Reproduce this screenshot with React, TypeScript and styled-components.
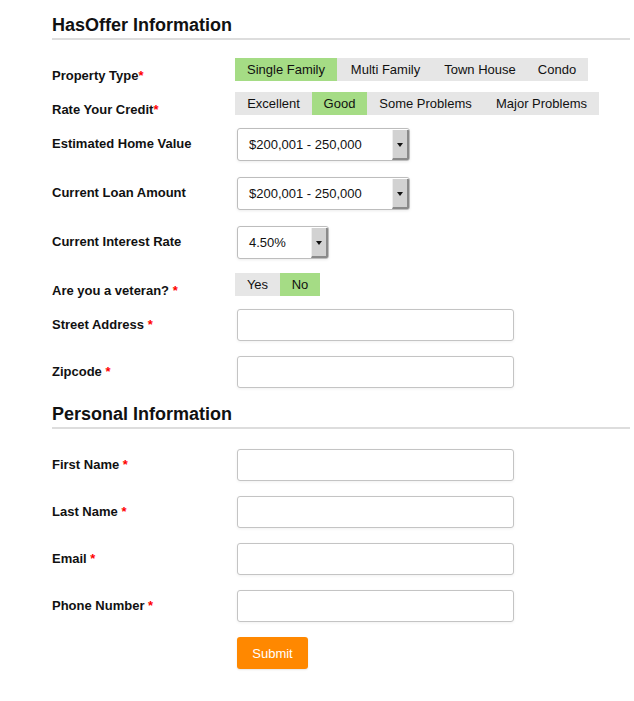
import React from 'react';
import styled, { createGlobalStyle } from 'styled-components';

const GlobalStyle = createGlobalStyle`
  html, body {
    margin: 0;
    padding: 0;
    background: #fff;
  }
  body {
    font-family: "Liberation Sans", Arial, sans-serif;
    color: #111;
  }
`;

const Page = styled.div`
  width: 634px;
  padding: 14px 4px 30px 52px;
  box-sizing: border-box;
`;

const SectionTitle = styled.h2<{ $top?: number }>`
  margin: ${(p) => p.$top ?? 0}px 0 0 0;
  padding: 0 0 2px 0;
  font-size: 18px;
  line-height: 22px;
  font-weight: bold;
  color: #111;
  border-bottom: 2px solid #dddddd;
`;

const Row = styled.div<{ $h: number; $top?: number }>`
  display: flex;
  align-items: flex-start;
  height: ${(p) => p.$h}px;
  margin-top: ${(p) => p.$top ?? 0}px;
`;

const Label = styled.div<{ $pad: number }>`
  width: 183px;
  flex: none;
  padding-top: ${(p) => p.$pad}px;
  font-size: 13px;
  line-height: 15px;
  font-weight: bold;
  color: #111;
`;

const Star = styled.span`
  color: #ff0000;
`;

const ToggleGroup = styled.div`
  display: flex;
  background: #e6e6e6;
`;

const Toggle = styled.div<{ $on?: boolean; $w: number }>`
  width: ${(p) => p.$w}px;
  height: 23px;
  display: flex;
  align-items: center;
  justify-content: center;
  font-size: 13px;
  color: #111;
  background: ${(p) => (p.$on ? '#a5dc85' : '#e6e6e6')};
`;

const Field = styled.div`
  margin-left: 2px;
`;

const SelectBox = styled.div<{ $w: number }>`
  width: ${(p) => p.$w}px;
  height: 33px;
  box-sizing: border-box;
  border: 1px solid #bdbdbd;
  border-radius: 3px;
  box-shadow: 0 1px 3px rgba(0, 0, 0, 0.08);
  display: flex;
  align-items: stretch;
  background: #fff;
  overflow: hidden;
`;

const SelectText = styled.div`
  flex: 1;
  display: flex;
  align-items: center;
  padding-left: 11px;
  font-size: 13px;
  color: #111;
`;

const Arrow = styled.div`
  width: 14px;
  margin: 1px 0 0 0;
  background: #d2d2d2;
  border-right: 2px solid #8a8a8a;
  border-bottom: 2px solid #8a8a8a;
  border-left: 1px solid #eeeeee;
  display: flex;
  align-items: center;
  justify-content: center;
  &::after {
    content: '';
    border-left: 3px solid transparent;
    border-right: 3px solid transparent;
    border-top: 4px solid #111;
    margin-top: 1px;
  }
`;

const TextInput = styled.input`
  width: 277px;
  height: 32px;
  box-sizing: border-box;
  border: 1px solid #c4c4c4;
  border-radius: 3px;
  box-shadow: 0 1px 3px rgba(0, 0, 0, 0.06);
  padding: 0 8px;
  font-family: inherit;
  font-size: 13px;
  outline: none;
  background: #fff;
`;

const Submit = styled.button`
  margin-left: 185px;
  width: 71px;
  height: 32px;
  border: none;
  border-radius: 3px;
  background: #ff8800;
  color: #fff;
  font-family: "Liberation Sans", Arial, sans-serif;
  font-size: 13px;
  box-shadow: 0 1px 2px rgba(0, 0, 0, 0.1);
  cursor: pointer;
`;

const req = <Star>*</Star>;

const Select = ({ value, w }: { value: string; w: number }) => (
  <Field>
    <SelectBox $w={w}>
      <SelectText>{value}</SelectText>
      <Arrow />
    </SelectBox>
  </Field>
);

const InputRow = ({ label, top }: { label: string; top?: number }) => (
  <Row $h={47} $top={top}>
    <Label $pad={8}>
      {label} {req}
    </Label>
    <Field>
      <TextInput type="text" />
    </Field>
  </Row>
);

export default function App() {
  return (
    <Page>
      <GlobalStyle />
      <SectionTitle>HasOffer Information</SectionTitle>

      <Row $h={34} $top={18}>
        <Label $pad={10}>Property Type{req}</Label>
        <ToggleGroup>
          <Toggle $w={102} $on>Single Family</Toggle>
          <Toggle $w={97}>Multi Family</Toggle>
          <Toggle $w={92}>Town House</Toggle>
          <Toggle $w={62}>Condo</Toggle>
        </ToggleGroup>
      </Row>

      <Row $h={36}>
        <Label $pad={10}>Rate Your Credit{req}</Label>
        <ToggleGroup>
          <Toggle $w={77}>Excellent</Toggle>
          <Toggle $w={55} $on>Good</Toggle>
          <Toggle $w={117}>Some Problems</Toggle>
          <Toggle $w={115}>Major Problems</Toggle>
        </ToggleGroup>
      </Row>

      <Row $h={49}>
        <Label $pad={8}>Estimated Home Value</Label>
        <Select value="$200,001 - 250,000" w={173} />
      </Row>

      <Row $h={49}>
        <Label $pad={8}>Current Loan Amount</Label>
        <Select value="$200,001 - 250,000" w={173} />
      </Row>

      <Row $h={47}>
        <Label $pad={8}>Current Interest Rate</Label>
        <Select value="4.50%" w={92} />
      </Row>

      <Row $h={36}>
        <Label $pad={10}>Are you a veteran? {req}</Label>
        <ToggleGroup>
          <Toggle $w={45}>Yes</Toggle>
          <Toggle $w={40} $on>No</Toggle>
        </ToggleGroup>
      </Row>

      <InputRow label="Street Address" />
      <InputRow label="Zipcode" />

      <SectionTitle>Personal Information</SectionTitle>

      <InputRow label="First Name" top={20} />
      <InputRow label="Last Name" />
      <InputRow label="Email" />
      <InputRow label="Phone Number" />

      <Submit type="button">Submit</Submit>
    </Page>
  );
}
